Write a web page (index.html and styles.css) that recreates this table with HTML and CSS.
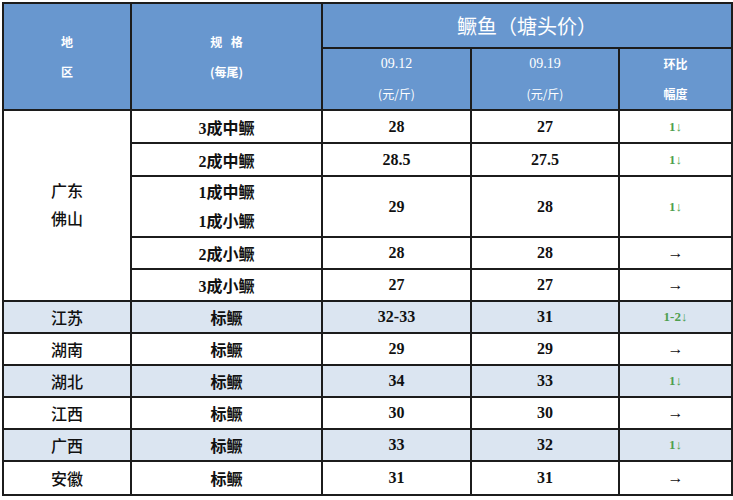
FILE: index.html
```html
<!DOCTYPE html>
<html lang="zh">
<head>
<meta charset="utf-8">
<link rel="stylesheet" href="styles.css">
</head>
<body>
<table class="price">
  <colgroup>
    <col class="c-region"><col class="c-spec"><col class="c-p1"><col class="c-p2"><col class="c-chg">
  </colgroup>
  <thead>
    <tr class="h1">
      <th rowspan="2" class="hs"><div>地</div><div>区</div></th>
      <th rowspan="2" class="hs"><div class="spaced">规 格</div><div>(每尾)</div></th>
      <th colspan="3" class="title">鳜鱼（塘头价）</th>
    </tr>
    <tr class="h2">
      <th class="hd"><div class="num">09.12</div><div>(元/斤)</div></th>
      <th class="hd"><div class="num">09.19</div><div>(元/斤)</div></th>
      <th class="hd hc"><div>环比</div><div>幅度</div></th>
    </tr>
  </thead>
  <tbody>
    <tr class="r r1">
      <td rowspan="5" class="region"><div>广东</div><div>佛山</div></td>
      <td>3成中鳜</td><td>28</td><td>27</td><td class="down">1↓</td>
    </tr>
    <tr class="r r2"><td>2成中鳜</td><td>28.5</td><td>27.5</td><td class="down">1↓</td></tr>
    <tr class="r r3"><td class="two"><div>1成中鳜</div><div>1成小鳜</div></td><td>29</td><td>28</td><td class="down">1↓</td></tr>
    <tr class="r r4"><td>2成小鳜</td><td>28</td><td>28</td><td class="flat">→</td></tr>
    <tr class="r r5"><td>3成小鳜</td><td>27</td><td>27</td><td class="flat">→</td></tr>
    <tr class="r r6 alt"><td class="region">江苏</td><td>标鳜</td><td>32-33</td><td>31</td><td class="down">1-2↓</td></tr>
    <tr class="r r7"><td class="region">湖南</td><td>标鳜</td><td>29</td><td>29</td><td class="flat">→</td></tr>
    <tr class="r r8 alt"><td class="region">湖北</td><td>标鳜</td><td>34</td><td>33</td><td class="down">1↓</td></tr>
    <tr class="r r9"><td class="region">江西</td><td>标鳜</td><td>30</td><td>30</td><td class="flat">→</td></tr>
    <tr class="r r10 alt"><td class="region">广西</td><td>标鳜</td><td>33</td><td>32</td><td class="down">1↓</td></tr>
    <tr class="r r11"><td class="region">安徽</td><td>标鳜</td><td>31</td><td>31</td><td class="flat">→</td></tr>
  </tbody>
</table>
</body>
</html>
```

FILE: styles.css
```css
html, body {
  margin: 0;
  padding: 0;
  background: #ffffff;
}

.price {
  margin: 2px 0 0 2px;
  border-collapse: collapse;
  table-layout: fixed;
  width: 729px;
  border: 2px solid #1c1c1c;
  font-family: "Liberation Serif", "Noto Sans CJK SC", serif;
  color: #111;
}

.c-region { width: 128px; }
.c-spec { width: 191px; }
.c-p1 { width: 149px; }
.c-p2 { width: 148px; }
.c-chg { width: 113px; }

.price th,
.price td {
  border: 2px solid #1c1c1c;
  padding: 0;
  text-align: center;
  vertical-align: middle;
}

.price th {
  background: #6897cf;
  color: #ffffff;
  font-family: "Noto Sans CJK SC", sans-serif;
  font-weight: 700;
  font-size: 12px;
}

.h1 { height: 45px; }
.h2 { height: 62px; }

.hs div { line-height: 30px; }
.hs .spaced { word-spacing: 6px; }

.price .title {
  font-size: 20px;
  font-weight: 400;
}

.hd div {
  line-height: 30px;
  font-weight: 400;
}
.hd .num {
  font-family: "Liberation Serif", serif;
  font-size: 14px;
}
.hc div { font-weight: 700; }

.price td {
  font-size: 16px;
  font-weight: 700;
}

.r { height: 32px; }
.r1 { height: 33px; }
.r2 { height: 33px; }
.r3 { height: 61px; }
.r11 { height: 34px; }

.price .alt td { background: #dbe5f1; }

.price .region { font-weight: 500; }
.region div { line-height: 28px; }

.two div { line-height: 29px; }

.price .down {
  color: #4f9f4f;
  font-size: 13px;
}
.price .flat {
  font-size: 16px;
  font-weight: 400;
}
```
